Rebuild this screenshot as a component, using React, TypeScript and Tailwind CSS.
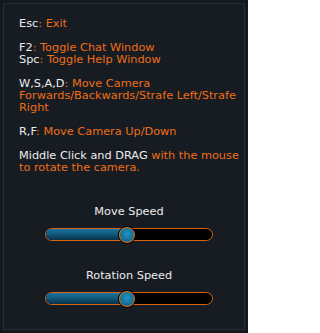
import React from "react";

const Key = ({ k, children }: { k: string; children: React.ReactNode }) => (
  <>
    <span className="text-[#ececec]">{k}</span>
    <span className="text-[#ee6e16]">{children}</span>
  </>
);

const Slider = ({ label, value }: { label: string; value: number }) => (
  <div className="flex flex-col items-center">
    <div className="text-[#ececec] leading-[12px]">{label}</div>
    <div className="relative mt-[10px] h-[13px] w-[168px] rounded-full border border-[#d8650f] bg-black">
      <div
        className="h-full rounded-l-full bg-gradient-to-b from-[#1b77a0] via-[#0f5678] to-[#0a3248]"
        style={{ width: `${value}%` }}
      />
      <div
        className="absolute top-1/2 h-[16px] w-[16px] -translate-x-1/2 -translate-y-1/2 rounded-full border-[1.5px] border-[#e0701a] bg-[radial-gradient(circle_at_50%_40%,#2290c0,#0e5a80)] shadow-[0_0_0_1px_#000]"
        style={{ left: `${value}%` }}
      />
    </div>
  </div>
);

export default function App() {
  return (
    <div className="h-[333px] w-[248px] bg-[#141920] p-[3px]" style={{ fontFamily: '"DejaVu Sans", sans-serif' }}>
      <div className="h-full w-full border border-[#262d35] bg-[#171c23] pl-[15px] pr-[5px] pt-[14px] text-[11.3px] leading-[12px]">
        <div className="w-[222px]">
          <p><Key k="Esc">: Exit</Key></p>
          <p className="mt-[12px]"><Key k="F2">: Toggle Chat Window</Key></p>
          <p><Key k="Spc">: Toggle Help Window</Key></p>
          <p className="mt-[12px]"><Key k="W,S,A,D">: Move Camera Forwards/Backwards/Strafe Left/Strafe Right</Key></p>
          <p className="mt-[12px]"><Key k="R,F">: Move Camera Up/Down</Key></p>
          <p className="mt-[12px]"><Key k="Middle Click and DRAG"> with the mouse to rotate the camera.</Key></p>
        </div>
        <div className="mt-[32px] w-[220px] space-y-[29px]">
          <Slider label="Move Speed" value={49} />
          <Slider label="Rotation Speed" value={49} />
        </div>
      </div>
    </div>
  );
}
